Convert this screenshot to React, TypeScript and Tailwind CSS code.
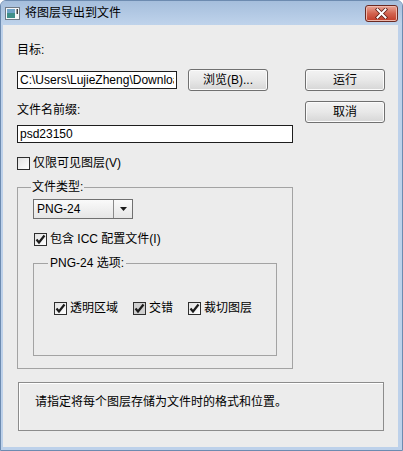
import React from "react";

const font = "font-['Liberation_Sans','Noto_Sans_CJK_SC',sans-serif]";

const Tick = () => (
  <svg width="11" height="11" viewBox="0 0 11 11">
    <path d="M1.5 5.5 L4 8.5 L9.5 1.5" fill="none" stroke="#1c1c1c" strokeWidth="2.2" />
  </svg>
);

const CheckBox = ({ checked, gray }: { checked?: boolean; gray?: boolean }) => (
  <span
    className={
      "w-[13px] h-[13px] shrink-0 border border-[#2e2e2e] flex items-center justify-center " +
      (gray ? "bg-[#cfcfcf]" : "bg-linear-to-br from-[#e2e2e2] to-white")
    }
  >
    {checked && <Tick />}
  </span>
);

const CheckRow = ({ label, checked, gray }: { label: string; checked?: boolean; gray?: boolean }) => (
  <label className="flex items-center gap-[3px] h-[16px] leading-[16px] whitespace-nowrap">
    <CheckBox checked={checked} gray={gray} />
    <span>{label}</span>
  </label>
);

const Button = ({ children, className = "" }: { children: React.ReactNode; className?: string }) => (
  <button
    type="button"
    className={
      "w-[80px] h-[22px] rounded-[3px] border border-[#707070] bg-linear-to-b from-[#f3f3f3] via-[#e8e8e8] to-[#d6d6d6] shadow-[inset_0_0_0_1px_#fbfbfb] text-[12px] leading-[16px] text-black " +
      className
    }
  >
    {children}
  </button>
);

const App = () => {
  return (
    <div className={`w-[403px] h-[451px] flex flex-col bg-[#bdd1ea] border border-[#6d8bb0] rounded-t-[6px] text-[12px] text-black ${font}`}>
      {/* title bar */}
      <div className="h-[24px] flex items-center pl-[4px] pr-[4px] bg-linear-to-b from-[#a5bedc] to-[#bfd3eb] rounded-t-[5px]">
        <svg width="15" height="13" viewBox="0 0 15 13" className="mr-[5px]">
          <rect x="0.5" y="0.5" width="14" height="12" fill="#f4f6f8" stroke="#6f7a86" />
          <rect x="2" y="2" width="8" height="9" fill="#3f8f8a" />
          <rect x="2" y="2" width="8" height="4" fill="#6fa3c8" />
          <rect x="11.5" y="2" width="1.5" height="5" fill="#404040" />
        </svg>
        <span className="leading-[16px] text-[12px]">将图层导出到文件</span>
        <div className="ml-auto w-[33px] h-[17px] rounded-[3px] border border-[#6b2a22] bg-linear-to-b from-[#e8a596] via-[#d2634f] to-[#c03a26] flex items-center justify-center shadow-[inset_0_0_0_1px_#efb9ad]">
          <svg width="13" height="11" viewBox="0 0 13 11">
            <path d="M2.5 1.5 L10.5 9.5 M10.5 1.5 L2.5 9.5" stroke="#5a1c14" strokeWidth="3.6" strokeLinecap="square" />
            <path d="M2.5 1.5 L10.5 9.5 M10.5 1.5 L2.5 9.5" stroke="#ffffff" strokeWidth="2" strokeLinecap="square" />
          </svg>
        </div>
      </div>

      {/* client area */}
      <div className="flex-1 ml-[2px] mr-[4px] mb-[3px] bg-[#ececec] pl-[14px] pt-[17px]">
        <div className="flex">
          {/* left column */}
          <div className="w-[276px] flex flex-col">
            <div className="h-[16px] leading-[16px]">目标:</div>
            <div className="mt-[11px] h-[22px] flex items-center">
              <input
                readOnly
                defaultValue="C:\Users\LujieZheng\Downloads"
                className="w-[160px] h-[18px] border border-[#1e1e1e] bg-white px-[2px] text-[12px] leading-[16px] outline-none"
              />
              <Button className="ml-[11px]">浏览(B)...</Button>
            </div>
            <div className="mt-[11px] h-[16px] leading-[16px]">文件名前缀:</div>
            <input
              readOnly
              defaultValue="psd23150"
              className="mt-[7px] w-[276px] h-[18px] border border-[#1e1e1e] bg-white px-[2px] text-[12px] leading-[16px] outline-none"
            />
            <div className="mt-[12px]">
              <CheckRow label="仅限可见图层(V)" />
            </div>
          </div>

          {/* right column */}
          <div className="ml-[12px] pt-[27px] flex flex-col gap-[10px]">
            <Button>运行</Button>
            <Button>取消</Button>
          </div>
        </div>

        {/* file type group */}
        <fieldset className="mt-[8px] w-[276px] border border-[#a3a3a3] pl-[15px] pb-[12px]">
          <legend className="h-[16px] leading-[16px] px-[1px] -ml-[2px]">文件类型:</legend>
          <div className="mt-[4px] w-[100px] h-[20px] flex border border-[#707070] bg-linear-to-b from-[#fafafa] to-[#e6e6e6]">
            <div className="flex-1 pl-[3px] leading-[18px]">PNG-24</div>
            <div className="w-[19px] border-l border-[#8a8a8a] flex items-center justify-center">
              <svg width="7" height="4" viewBox="0 0 7 4">
                <path d="M0 0 L7 0 L3.5 4 Z" fill="#1a1a1a" />
              </svg>
            </div>
          </div>
          <div className="mt-[12px] ml-[1px]">
            <CheckRow label="包含 ICC 配置文件(I)" checked />
          </div>

          <fieldset className="mt-[8px] w-[244px] border border-[#a3a3a3] pl-[20px] pb-[39px]">
            <legend className="h-[16px] leading-[16px] px-[2px] -ml-[6px]">PNG-24 选项:</legend>
            <div className="mt-[29px] flex gap-[15px]">
              <CheckRow label="透明区域" checked />
              <CheckRow label="交错" checked gray />
              <CheckRow label="裁切图层" checked />
            </div>
          </fieldset>
        </fieldset>

        {/* info box */}
        <div className="mt-[13px] ml-[1px] w-[366px] h-[49px] border border-[#8c8c8c] shadow-[inset_1px_1px_0_#ffffff] pl-[16px] pt-[11px]">
          <div className="h-[16px] leading-[16px]">请指定将每个图层存储为文件时的格式和位置。</div>
        </div>
      </div>
    </div>
  );
};

export default App;
